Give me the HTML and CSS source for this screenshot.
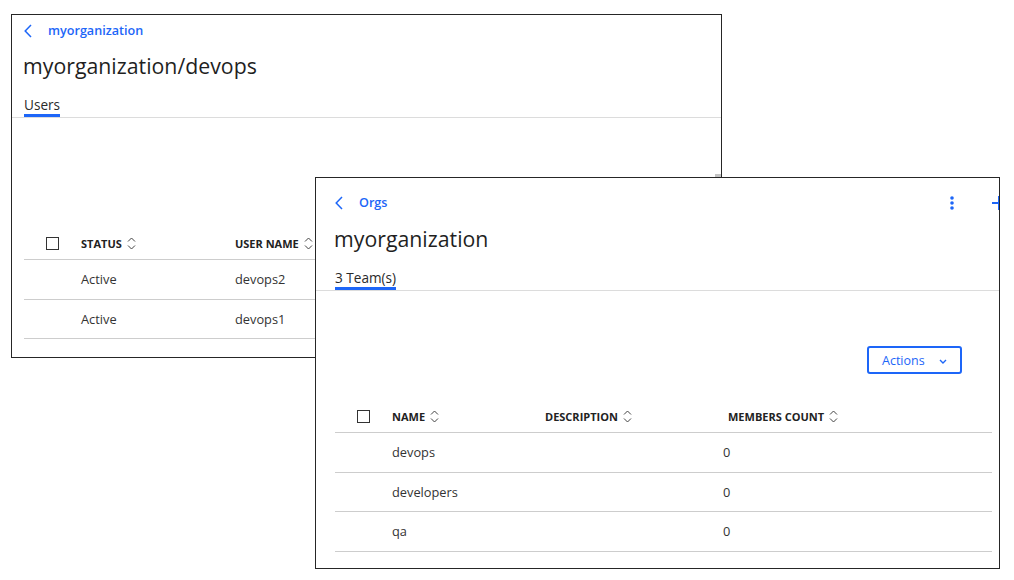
FILE: index.html
```html
<!DOCTYPE html>
<html lang="en">
<head>
<meta charset="utf-8">
<title>Teams</title>
<link rel="stylesheet" href="styles.css">
</head>
<body>
<div class="desk">
  <section class="win win-team">
    <header class="crumb">
      <svg class="back" viewBox="0 0 8 14" width="8" height="14"><path d="M7 1 1.2 7 7 13" fill="none" stroke="#1d66f8" stroke-width="1.5"/></svg>
      <span class="crumb-link">myorganization</span>
    </header>
    <h1 class="title">myorganization/devops</h1>
    <nav class="tabs"><span class="tab">Users</span></nav>
    <div class="tbl">
      <div class="row head">
        <span class="cell"><span class="box"></span></span>
        <span class="cell hcell">STATUS <svg class="sort" viewBox="0 0 9 13" width="9" height="13"><path d="M1 4.5 4.5 1 8 4.5M1 8.5 4.5 12 8 8.5" fill="none" stroke="#444" stroke-width="1"/></svg></span>
        <span class="cell hcell">USER NAME <svg class="sort" viewBox="0 0 9 13" width="9" height="13"><path d="M1 4.5 4.5 1 8 4.5M1 8.5 4.5 12 8 8.5" fill="none" stroke="#444" stroke-width="1"/></svg></span>
      </div>
      <div class="row">
        <span class="cell"></span>
        <span class="cell">Active</span>
        <span class="cell">devops2</span>
      </div>
      <div class="row">
        <span class="cell"></span>
        <span class="cell">Active</span>
        <span class="cell">devops1</span>
      </div>
    </div>
    <div class="grip"></div>
  </section>

  <section class="win win-org">
    <header class="crumb">
      <svg class="back" viewBox="0 0 8 14" width="8" height="14"><path d="M7 1 1.2 7 7 13" fill="none" stroke="#1d66f8" stroke-width="1.5"/></svg>
      <span class="crumb-link">Orgs</span>
      <span class="head-actions">
        <svg class="kebab" viewBox="0 0 6 14" width="6" height="14"><circle cx="3" cy="2" r="1.8" fill="#1d66f8"/><circle cx="3" cy="7" r="1.8" fill="#1d66f8"/><circle cx="3" cy="12" r="1.8" fill="#1d66f8"/></svg>
        <svg class="plus" viewBox="0 0 14 14" width="14" height="14"><path d="M0 7H14M7 0V14" fill="none" stroke="#1d66f8" stroke-width="2"/></svg>
      </span>
    </header>
    <h1 class="title">myorganization</h1>
    <nav class="tabs"><span class="tab">3 Team(s)</span></nav>
    <div class="toolbar">
      <button class="btn">Actions <svg viewBox="0 0 8 5" width="8" height="5"><path d="M1 1 4 4 7 1" fill="none" stroke="#1d66f8" stroke-width="1.4"/></svg></button>
    </div>
    <div class="tbl">
      <div class="row head">
        <span class="cell"><span class="box"></span></span>
        <span class="cell hcell">NAME <svg class="sort" viewBox="0 0 9 13" width="9" height="13"><path d="M1 4.5 4.5 1 8 4.5M1 8.5 4.5 12 8 8.5" fill="none" stroke="#444" stroke-width="1"/></svg></span>
        <span class="cell hcell">DESCRIPTION <svg class="sort" viewBox="0 0 9 13" width="9" height="13"><path d="M1 4.5 4.5 1 8 4.5M1 8.5 4.5 12 8 8.5" fill="none" stroke="#444" stroke-width="1"/></svg></span>
        <span class="cell hcell num">MEMBERS COUNT <svg class="sort" viewBox="0 0 9 13" width="9" height="13"><path d="M1 4.5 4.5 1 8 4.5M1 8.5 4.5 12 8 8.5" fill="none" stroke="#444" stroke-width="1"/></svg></span>
      </div>
      <div class="row">
        <span class="cell"></span>
        <span class="cell">devops</span>
        <span class="cell"></span>
        <span class="cell">0</span>
      </div>
      <div class="row">
        <span class="cell"></span>
        <span class="cell">developers</span>
        <span class="cell"></span>
        <span class="cell">0</span>
      </div>
      <div class="row">
        <span class="cell"></span>
        <span class="cell">qa</span>
        <span class="cell"></span>
        <span class="cell">0</span>
      </div>
    </div>
  </section>
</div>
</body>
</html>
```

FILE: styles.css
```css
* { box-sizing: border-box; }

body {
  margin: 0;
  background: #fff;
  font-family: "Open Sans", "Noto Sans", sans-serif;
  color: #222;
}

.desk {
  position: relative;
  width: 1014px;
  height: 580px;
  overflow: hidden;
}

.win {
  position: absolute;
  background: #fff;
  border: 1px solid #262626;
  overflow: hidden;
}

.win-team { left: 11px; top: 14px; width: 711px; height: 344px; }
.win-org { left: 315px; top: 177px; width: 685px; height: 392px; }

.crumb {
  display: flex;
  align-items: center;
  gap: 16px;
  height: 16px;
}
.win-team .crumb { padding: 0 12px; margin-top: 8px; }
.win-org .crumb { padding: 0 0 0 19px; margin-top: 17px; }

.back { display: block; flex: none; }

.crumb-link {
  font-size: 12.6px;
  font-weight: 600;
  line-height: 16px;
  color: #1d66f8;
}

.head-actions {
  margin-left: auto;
  margin-right: -7px;
  display: flex;
  align-items: center;
  gap: 37px;
}
.kebab, .plus { display: block; }

.title {
  margin: 0;
  font-size: 21.3px;
  font-weight: 400;
  line-height: 30px;
  color: #1f1f1f;
}
.win-team .title { padding-left: 11px; margin-top: 12px; }
.win-org .title { padding-left: 18px; margin-top: 13px; }

.tabs {
  display: flex;
  border-bottom: 1px solid #dcdcdc;
  margin-top: 15px;
}
.win-team .tabs { padding-left: 12px; }
.win-org .tabs { padding-left: 19px; }

.tab {
  font-size: 13.6px;
  line-height: 18px;
  color: #2a2a2a;
  border-bottom: 3px solid #1d66f8;
}

.toolbar {
  display: flex;
  justify-content: flex-end;
  margin: 55px 37px 0 0;
}

.btn {
  display: flex;
  align-items: center;
  gap: 14px;
  width: 95px;
  height: 28px;
  padding: 0 0 0 13px;
  border: 2px solid #1d66f8;
  border-radius: 3px;
  background: #fff;
  font-family: inherit;
  font-size: 12.5px;
  color: #1d66f8;
}
.btn svg { display: block; margin-top: 2px; }

.tbl { font-size: 12.8px; color: #333; }
.win-team .tbl { margin: 110px 0 0 12px; }
.win-org .tbl { margin: 27px 7px 0 19px; }

.row {
  display: grid;
  align-items: center;
  height: 39.5px;
  border-bottom: 1px solid #cdcdcd;
}
.win-team .row { grid-template-columns: 57px 154px 1fr; }
.win-org .row { grid-template-columns: 57px 153px 178px 1fr; }

.row.head { height: 32px; }

.cell { white-space: nowrap; }

.hcell {
  display: flex;
  align-items: center;
  gap: 5px;
  font-size: 11px;
  font-weight: 700;
  color: #222;
}
.hcell.num { padding-left: 5px; }
.sort { display: block; }

.box {
  display: block;
  width: 13px;
  height: 13px;
  border: 1px solid #333;
  margin-left: 22px;
}

.grip {
  position: absolute;
  left: 703px;
  top: 159px;
  width: 6px;
  height: 3px;
  background: #c4c4c4;
}
```
